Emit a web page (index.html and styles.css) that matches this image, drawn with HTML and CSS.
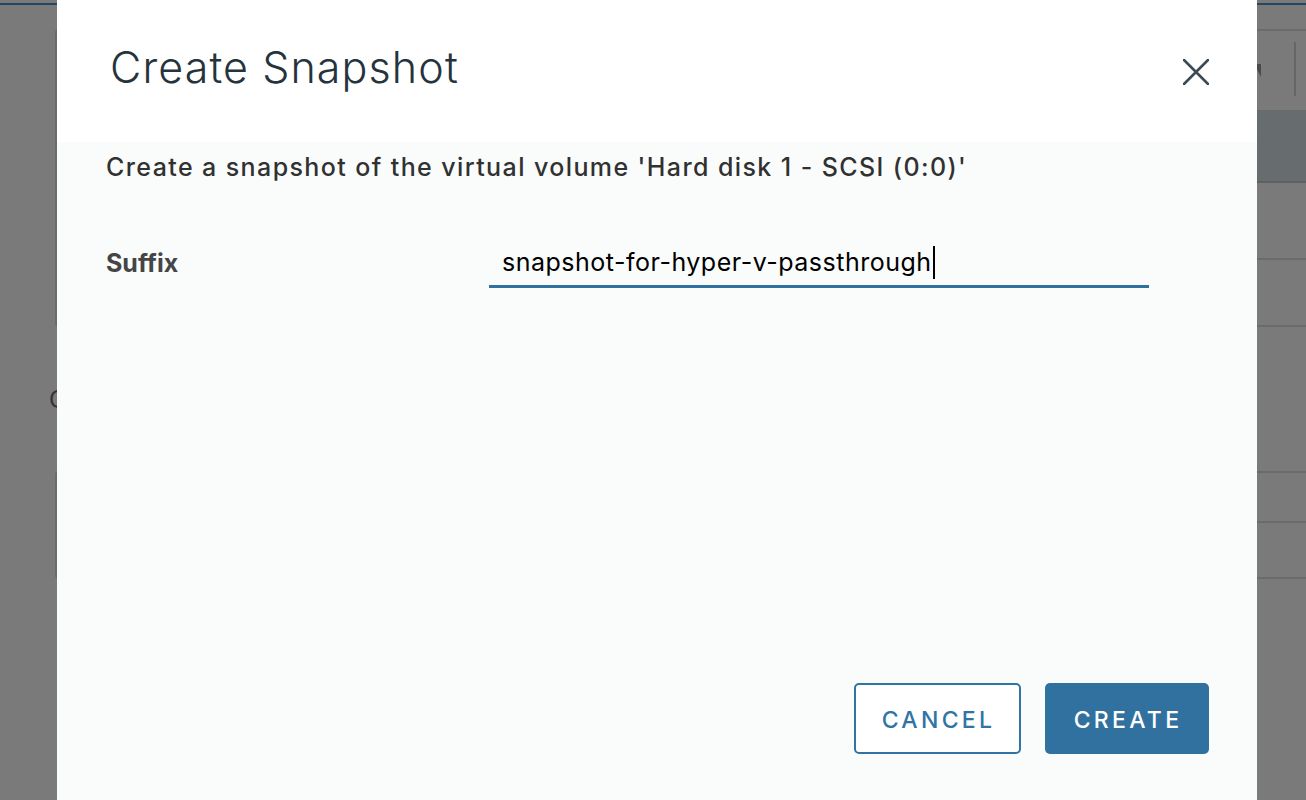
FILE: index.html
```html
<!DOCTYPE html>
<html lang="en">
<head>
<meta charset="utf-8">
<title>Create Snapshot</title>
<link rel="stylesheet" href="styles.css">
</head>
<body>
<div class="page">
  <div class="tabline"></div>
  <div class="card card-main">
    <div class="toolbar">
      <span class="caret"></span>
      <span class="divider"></span>
    </div>
    <div class="thead"></div>
    <div class="trow r1"></div>
    <div class="trow r2"></div>
  </div>
  <div class="section-label">O</div>
  <div class="card card-second">
    <div class="trow r3"></div>
    <div class="trow r4"></div>
  </div>
</div>

<div class="modal" role="dialog" aria-labelledby="modal-title">
  <div class="modal-header">
    <h1 class="modal-title" id="modal-title">Create Snapshot</h1>
    <button class="close" aria-label="Close">
      <svg width="26" height="26" viewBox="0 0 26 26" aria-hidden="true">
        <path d="M1 1 L25 25 M25 1 L1 25" stroke="#3c4a54" stroke-width="2.6" stroke-linecap="round" fill="none"/>
      </svg>
    </button>
  </div>
  <div class="modal-body">
    <p class="intro">Create a snapshot of the virtual volume 'Hard disk 1 - SCSI (0:0)'</p>
    <div class="form-row">
      <label class="label">Suffix</label>
      <div class="input"><span class="value">snapshot-for-hyper-v-passthrough</span><span class="cursor"></span></div>
    </div>
  </div>
  <div class="modal-footer">
    <button class="btn btn-outline">CANCEL</button>
    <button class="btn btn-primary">CREATE</button>
  </div>
</div>
</body>
</html>
```

FILE: styles.css
```css
* { box-sizing: border-box; }

html, body {
  margin: 0;
  height: 800px;
  overflow: hidden;
}

body {
  background: #7a7a7a;
  font-family: Inter, Lato, "Liberation Sans", sans-serif;
}

/* background page (under the overlay) */
.page {
  padding: 0 0 0 55px;
  display: flex;
  flex-direction: column;
}

.tabline {
  height: 5px;
  border-bottom: 2px solid #1e4866;
  margin-bottom: 24px;
  margin-left: -55px;
}

.card {
  border: 2px solid #6b6b6b;
  border-right: none;
  border-radius: 4px 0 0 4px;
}

.card-main {
  height: 298px;
  display: flex;
  flex-direction: column;
}

.toolbar {
  height: 79px;
  position: relative;
}

.caret {
  position: absolute;
  left: 1197px;
  top: 33px;
  width: 0;
  height: 0;
  border-left: 7px solid transparent;
  border-top: 13px solid #4a4a4a;
}

.divider {
  position: absolute;
  left: 1237px;
  top: 11px;
  width: 2px;
  height: 54px;
  background: #666;
}

.thead {
  height: 73px;
  background: #676c6f;
  border-bottom: 2px solid #5e6163;
}

.trow {
  border-bottom: 2px solid #6b6b6b;
}

.r1 { height: 77px; }
.r2 { flex: 1; border-bottom: none; }

.section-label {
  margin: 58px 0 0 -6px;
  height: 86px;
  color: #333;
  font-size: 24px;
  line-height: 30px;
}

.card-second {
  height: 108px;
  display: flex;
  flex-direction: column;
}

.r3 { height: 50px; }
.r4 { flex: 1; border-bottom: none; }

/* modal */
.modal {
  position: fixed;
  left: 57px;
  top: 0;
  width: 1200px;
  height: 800px;
  background: #fafcfc;
  display: flex;
  flex-direction: column;
}

.modal-header {
  height: 142px;
  background: #ffffff;
  display: flex;
  align-items: center;
  justify-content: space-between;
  padding: 0 48px 0 53px;
}

.modal-title {
  margin: 0 0 6px 0;
  font-size: 43px;
  font-weight: 300;
  color: #25333d;
  letter-spacing: 1.1px;
  line-height: 1.2;
}

.close {
  border: none;
  background: none;
  padding: 0;
  width: 26px;
  height: 26px;
  margin-top: 2px;
  cursor: pointer;
}

.close svg { display: block; }

.modal-body {
  flex: 1;
  padding: 8px 49px 0 49px;
}

.intro {
  margin: 0;
  font-size: 25px;
  line-height: 34px;
  font-weight: 500;
  color: #313131;
  letter-spacing: 1.4px;
}

.form-row {
  display: grid;
  grid-template-columns: 383px 660px;
  align-items: end;
  margin-top: 61px;
}

.label {
  font-size: 25px;
  font-weight: 700;
  color: #454545;
  line-height: 32px;
  padding-bottom: 9px;
}

.input {
  border-bottom: 3px solid #2f72a0;
  padding: 0 0 6px 13px;
  font-size: 25px;
  line-height: 34px;
  color: #000;
  letter-spacing: 0.5px;
  display: flex;
  align-items: center;
}

.cursor {
  display: inline-block;
  width: 2px;
  height: 33px;
  background: #000;
  margin-left: 1px;
}

.modal-footer {
  display: flex;
  justify-content: flex-end;
  gap: 24px;
  padding: 0 48px 46px 0;
}

.btn {
  height: 71px;
  border-radius: 5px;
  font-family: inherit;
  font-size: 23px;
  font-weight: 500;
  letter-spacing: 3.3px;
  padding: 3px 0 0 2px;
  cursor: pointer;
}

.btn-outline {
  width: 167px;
  background: #ffffff;
  border: 2px solid #3174a3;
  color: #3174a3;
}

.btn-primary {
  width: 164px;
  background: #31719f;
  border: none;
  color: #ffffff;
}
```
